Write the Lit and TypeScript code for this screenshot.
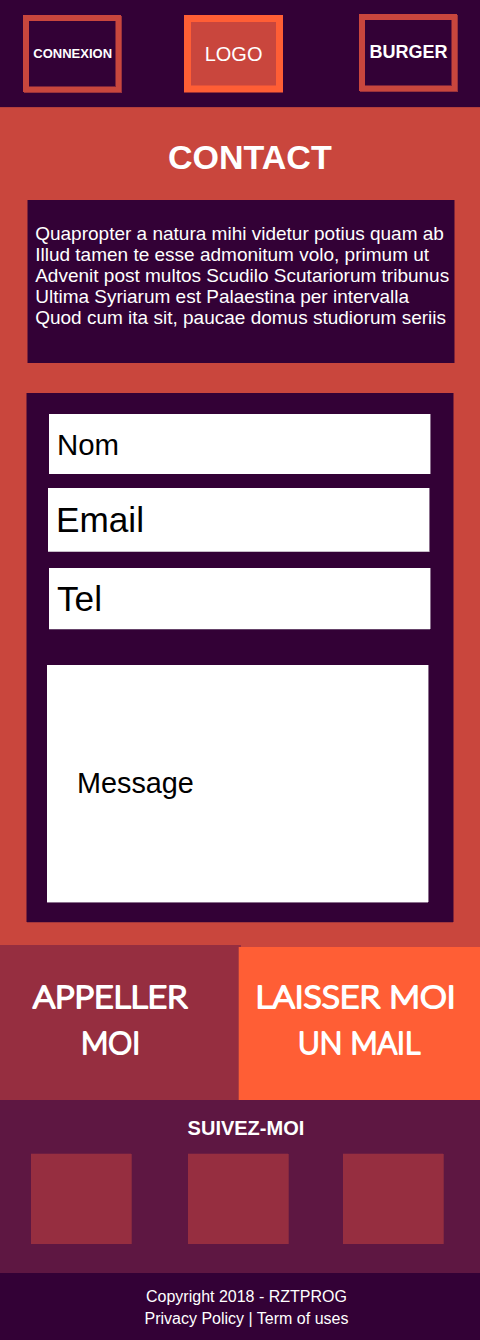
import { LitElement, html, css, svg } from "lit";
import { customElement } from "lit/decorators.js";

interface Line { text: string; x: number; y: number; width: number }

const callLines: Line[] = [
  { text: "APPELLER", x: 33, y: 63, width: 154.5 },
  { text: "MOI", x: 81, y: 109, width: 59 },
];
const mailLines: Line[] = [
  { text: "LAISSER MOI", x: 16.5, y: 61, width: 200 },
  { text: "UN MAIL", x: 59, y: 107, width: 122 },
];

const lines = (items: Line[]) => items.map(
  (l) => svg`<text x=${l.x} y=${l.y} textLength=${l.width} lengthAdjust="spacingAndGlyphs">${l.text}</text>`
);

@customElement("app-root")
export class AppRoot extends LitElement {
  static styles = css`
    :host {
      display: block;
      width: 480px;
      height: 1340px;
      overflow: hidden;
      background: #c9463d;
      color: #fff;
      font-family: "Liberation Sans", Arial, sans-serif;
    }
    * { box-sizing: border-box; }
    p, h1, h2 { margin: 0; }
    header {
      display: flex;
      align-items: flex-start;
      height: 107px;
      padding: 15px 0 0 23px;
      background: #330136;
      box-shadow: 0 1px #b33e3c;
      white-space: nowrap;
    }
    .tile {
      width: 98px;
      height: 77px;
      border: 6px solid #c9463d;
      border-width: 6px 5px 5px 6px;
      box-shadow: inset -1px -1px #7e243a, 1px 1px #9a323b;
      font-weight: bold;
    }
    .connexion { padding: 25px 0 0 4.3px; font-size: 13px; line-height: 15px; }
    .logo {
      width: 99px;
      margin-left: 63px;
      padding: 21px 0 0 13.7px;
      border-color: #ff5e35;
      border-width: 7px 7px 6px 7px;
      background: #c9463d;
      box-shadow: inset 0 -1px #e45239, 0 1px #993036;
      font-size: 20px;
      line-height: 22px;
      font-weight: normal;
    }
    .burger { margin: -1px 0 0 76px; padding: 22px 0 0 4.6px; font-size: 18px; line-height: 20px; }
    h1 { padding: 31px 0 24px 168px; font-size: 34px; line-height: 38px; }
    .intro {
      width: 426px;
      height: 163px;
      margin-left: 28px;
      padding: 23px 0 0 7.2px;
      background: #330136;
      box-shadow: 1px 0 #7e243a, -1px 0 #7e243a;
      font-size: 19px;
      line-height: 21px;
      white-space: nowrap;
    }
    .form {
      display: flex;
      flex-direction: column;
      width: 426px;
      height: 529px;
      margin: 30px 0 23px 27px;
      padding: 21px 0 0 20px;
      background: #330136;
      box-shadow: 1px 0 #7e243a, -1px 0 #7e243a, 0 1px #a3373c;
      color: #000;
    }
    .field { width: 381px; background: #fff; box-shadow: 1px 0 #8b6f8d; }
    .nom { height: 60px; margin-left: 2px; padding: 14px 0 0 8px; font-size: 29.4px; line-height: 33px; }
    .email {
      height: 64px;
      margin: 14px 0 0 1px;
      padding: 11px 0 0 8px;
      border-bottom: 1px solid #c8bcc8;
      font-size: 35.2px;
      line-height: 41px;
    }
    .tel {
      height: 61px;
      margin: 16px 0 0 2px;
      padding: 10px 0 0 8px;
      box-shadow: 1px 0 #8b6f8d, 0 1px #66446a;
      font-size: 35.2px;
      line-height: 41px;
    }
    .message {
      height: 237px;
      margin-top: 36px;
      padding: 102px 0 0 30px;
      box-shadow: 1px 0 #8b6f8d, 0 1px #8b6f8d;
      font-size: 28.8px;
      line-height: 32px;
    }
    .actions { display: flex; height: 155px; }
    .call { width: 241px; height: 155px; background: #962e40; }
    .mail { width: 241px; height: 153px; margin: 2px 0 0 -2px; background: #ff5e35; box-shadow: -1px 0 #b23e3d; }
    .caption { display: block; width: 241px; height: 153px; }
    .caption text {
      font-family: Lato, "Open Sans", sans-serif;
      font-size: 31px;
      font-weight: 300;
      fill: #fff;
      stroke: #fff;
      stroke-width: 2.2px;
      stroke-linejoin: round;
      stroke-linecap: round;
    }
    .social { height: 173px; padding-top: 17px; background: #5e1742; }
    h2 { padding-left: 187.6px; font-size: 20px; line-height: 22px; }
    .links { display: flex; padding: 15px 0 0 31px; }
    .link { width: 100px; height: 90px; background: #962e40; box-shadow: 1px 0 #84283f, 0 -1px #6d1d42; }
    .second { margin-left: 57px; }
    .third { margin-left: 55px; }
    footer { height: 67px; padding: 13px 0 0 144.5px; background: #330136; font-size: 16px; line-height: 22px; }
    .copyright { padding-left: 1.5px; }
  `;

  render() {
    return html`
      <header>
        <div class="tile connexion">CONNEXION</div>
        <div class="tile logo">LOGO</div>
        <div class="tile burger">BURGER</div>
      </header>
      <h1>CONTACT</h1>
      <p class="intro">
        Quapropter a natura mihi videtur potius quam ab<br />
        Illud tamen te esse admonitum volo, primum ut<br />
        Advenit post multos Scudilo Scutariorum tribunus<br />
        Ultima Syriarum est Palaestina per intervalla<br />
        Quod cum ita sit, paucae domus studiorum seriis
      </p>
      <div class="form">
        <div class="field nom">Nom</div>
        <div class="field email">Email</div>
        <div class="field tel">Tel</div>
        <div class="field message">Message</div>
      </div>
      <div class="actions">
        <div class="call"><svg class="caption">${lines(callLines)}</svg></div>
        <div class="mail"><svg class="caption">${lines(mailLines)}</svg></div>
      </div>
      <div class="social">
        <h2>SUIVEZ-MOI</h2>
        <div class="links">
          <div class="link"></div>
          <div class="link second"></div>
          <div class="link third"></div>
        </div>
      </div>
      <footer>
        <p class="copyright">Copyright 2018 - RZTPROG</p>
        <p>Privacy Policy | Term of uses</p>
      </footer>
    `;
  }
}
